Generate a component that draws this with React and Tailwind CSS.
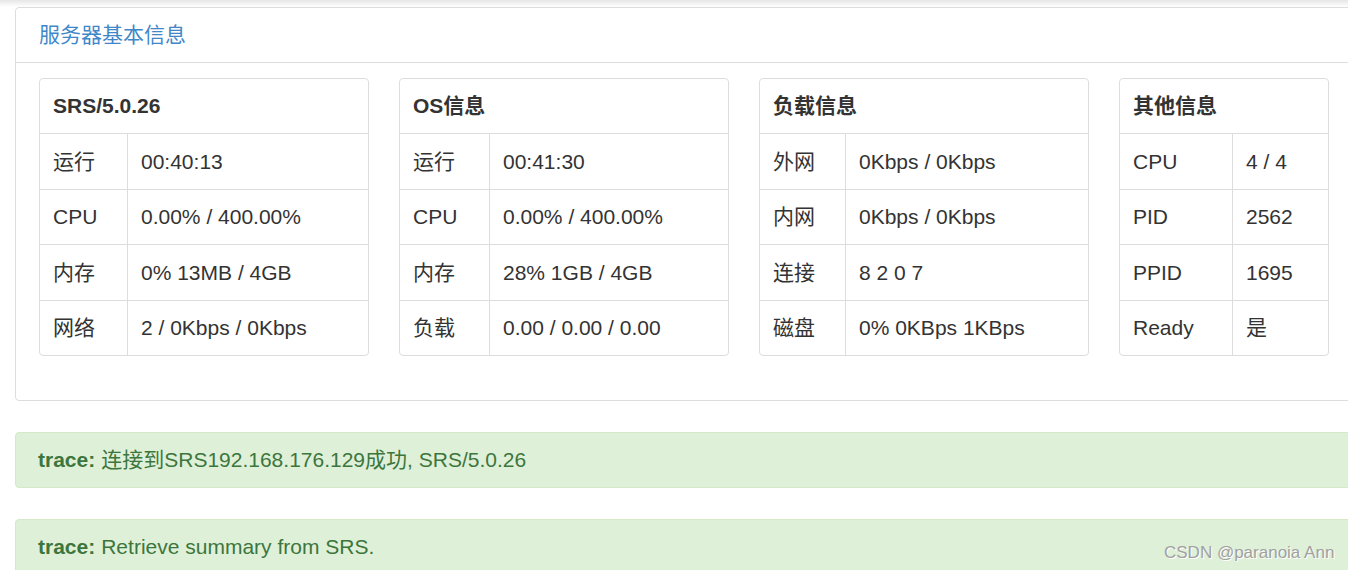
import React from 'react';

const cards = [
  {
    title: "SRS/5.0.26",
    width: "w-[330px]",
    labelW: "w-[88px]",
    rows: [
      ["运行", "00:40:13"],
      ["CPU", "0.00% / 400.00%"],
      ["内存", "0% 13MB / 4GB"],
      ["网络", "2 / 0Kbps / 0Kbps"],
    ],
  },
  {
    title: "OS信息",
    width: "w-[330px]",
    labelW: "w-[90px]",
    rows: [
      ["运行", "00:41:30"],
      ["CPU", "0.00% / 400.00%"],
      ["内存", "28% 1GB / 4GB"],
      ["负载", "0.00 / 0.00 / 0.00"],
    ],
  },
  {
    title: "负载信息",
    width: "w-[330px]",
    labelW: "w-[86px]",
    rows: [
      ["外网", "0Kbps / 0Kbps"],
      ["内网", "0Kbps / 0Kbps"],
      ["连接", "8 2 0 7"],
      ["磁盘", "0% 0KBps 1KBps"],
    ],
  },
  {
    title: "其他信息",
    width: "w-[210px]",
    labelW: "w-[113px]",
    rows: [
      ["CPU", "4 / 4"],
      ["PID", "2562"],
      ["PPID", "1695"],
      ["Ready", "是"],
    ],
  },
];

const InfoCard = ({ card }) => (
  <div className={`${card.width} shrink-0 border border-[#dddddd] rounded-[4px]`}>
    <div className="h-[54px] flex items-center px-[13px] font-bold">{card.title}</div>
    {card.rows.map(([k, v]) => (
      <div key={k} className="h-[55.5px] flex border-t border-[#dddddd]">
        <div className={`${card.labelW} shrink-0 flex items-center px-[13px] border-r border-[#dddddd]`}>{k}</div>
        <div className="flex items-center px-[13px] whitespace-nowrap">{v}</div>
      </div>
    ))}
  </div>
);

const Alert = ({ children }) => (
  <div className="w-[1400px] h-[56px] flex items-center px-[22px] bg-[#dff0d8] border border-[#d6e9c6] rounded-[4px] text-[#3c763d] whitespace-nowrap">
    {children}
  </div>
);

export default function App() {
  return (
    <div
      className="relative w-[1348px] h-[570px] overflow-hidden bg-white text-[21px] text-[#333333]"
      style={{ fontFamily: '"Liberation Sans", Arial, "Noto Sans CJK SC", sans-serif' }}
    >
      <div className="h-[7px] bg-gradient-to-b from-[#e6e6e6] to-white" />
      <div className="pl-[15px] flex flex-col gap-[31px]">
        <div className="w-[1400px] border border-[#dddddd] rounded-[4px]">
          <div className="h-[55px] flex items-center px-[23px] border-b border-[#dddddd] text-[#3f87c9]">
            服务器基本信息
          </div>
          <div className="flex gap-[30px] pl-[23px] pt-[15px] pb-[44px]">
            {cards.map((c) => (
              <InfoCard key={c.title} card={c} />
            ))}
          </div>
        </div>
        <Alert>
          <b className="mr-[6px]">trace:</b>连接到SRS192.168.176.129成功, SRS/5.0.26
        </Alert>
        <Alert>
          <b className="mr-[6px]">trace:</b>Retrieve summary from SRS.
        </Alert>
      </div>
      <div className="absolute left-[1164px] top-[540px] text-[17px] text-[#a0a0a0] [text-shadow:1px_1px_0_#ffffff] whitespace-nowrap">
        CSDN @paranoia Ann
      </div>
    </div>
  );
}
